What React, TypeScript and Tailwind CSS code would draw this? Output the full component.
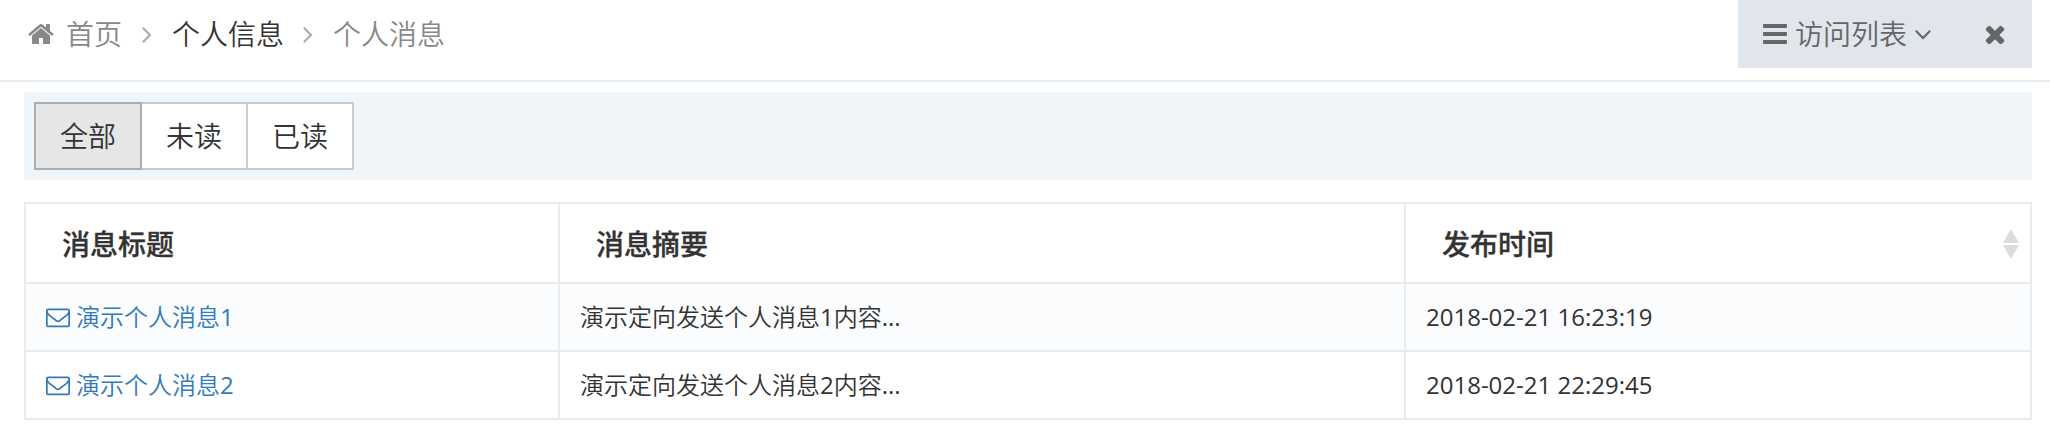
import type { ReactNode } from "react";

type IconProps = { path: string; className?: string };

function Icon({ path, className = "" }: IconProps) {
  return (
    <svg viewBox="0 0 1792 1792" fill="currentColor" className={`shrink-0 ${className}`} aria-hidden="true">
      <path d={path} />
    </svg>
  );
}

const HOME =
  "M1472 992v480q0 26-19 45t-45 19h-384v-384h-256v384h-384q-26 0-45-19t-19-45v-480q0-1 .5-3t.5-3l575-474 575 474q1 2 1 6zm223-69l-62 74q-8 9-21 11h-3q-13 0-21-7l-692-577-692 577q-12 8-24 7-13-2-21-11l-62-74q-8-10-7-23.5t11-21.5l719-599q32-26 76-26t76 26l244 204v-195q0-14 9-23t23-9h192q14 0 23 9t9 23v408l219 182q10 8 11 21.5t-7 23.5z";
const BARS =
  "M1664 1344v128q0 26-19 45t-45 19h-1408q-26 0-45-19t-19-45v-128q0-26 19-45t45-19h1408q26 0 45 19t19 45zm0-512v128q0 26-19 45t-45 19h-1408q-26 0-45-19t-19-45v-128q0-26 19-45t45-19h1408q26 0 45 19t19 45zm0-512v128q0 26-19 45t-45 19h-1408q-26 0-45-19t-19-45v-128q0-26 19-45t45-19h1408q26 0 45 19t19 45z";
const TIMES =
  "M1490 1322q0 40-28 68l-136 136q-28 28-68 28t-68-28l-294-294-294 294q-28 28-68 28t-68-28l-136-136q-28-28-28-68t28-68l294-294-294-294q-28-28-28-68t28-68l136-136q28-28 68-28t68 28l294 294 294-294q28-28 68-28t68 28l136 136q28 28 28 68t-28 68l-294 294 294 294q28 28 28 68z";
const ANGLE_RIGHT =
  "M1171 960q0 13-10 23l-466 466q-10 10-23 10t-23-10l-50-50q-10-10-10-23t10-23l393-393-393-393q-10-10-10-23t10-23l50-50q10-10 23-10t23 10l466 466q10 10 10 23z";
const ANGLE_DOWN =
  "M1395 736q0 13-10 23l-466 466q-10 10-23 10t-23-10l-466-466q-10-10-10-23t10-23l50-50q10-10 23-10t23 10l393 393 393-393q10-10 23-10t23 10l50 50q10 10 10 23z";
const ENVELOPE =
  "M1664 1504v-768q-32 36-69 66-268 206-426 338-51 43-83 67t-86.5 48.5-102.5 24.5h-2q-48 0-102.5-24.5t-86.5-48.5-83-67q-158-132-426-338-37-30-69-66v768q0 13 9.5 22.5t22.5 9.5h1472q13 0 22.5-9.5t9.5-22.5zm0-1051v-24.5l-.5-13-3-12.5-5.5-9-9-7.5-14-2.5h-1472q-13 0-22.5 9.5t-9.5 22.5q0 168 147 284 193 152 401 317 6 5 35 29.5t46 37.5 44.5 31.5 50.5 27.5 43 9h2q20 0 43-9t50.5-27.5 44.5-31.5 46-37.5 35-29.5q208-165 401-317 54-43 100.5-115.5t46.5-131.5zm128-37v1088q0 66-47 113t-113 47h-1472q-66 0-113-47t-47-113v-1088q0-66 47-113t113-47h1472q66 0 113 47t47 113z";

const messages = [
  { title: "演示个人消息1", summary: "演示定向发送个人消息1内容...", time: "2018-02-21 16:23:19" },
  { title: "演示个人消息2", summary: "演示定向发送个人消息2内容...", time: "2018-02-21 22:29:45" },
];

/** Sets Chinese runs in the demi-light weight and keeps Latin runs regular. */
function MixedText({ text }: { text: string }) {
  return (
    <span>
      {text.split(/([\u4e00-\u9fff]+)/).filter(Boolean).map((run, i) => (
        <span key={i} className={/[\u4e00-\u9fff]/.test(run) ? "font-[350]" : "font-normal"}>
          {run}
        </span>
      ))}
    </span>
  );
}

function HeadCell({ children }: { children: ReactNode }) {
  return (
    <th className="border-r-2 border-b-2 border-[#e7ecf1] p-0 text-left text-[28px] leading-10 font-medium [-webkit-text-stroke:0.3px_#333]">
      <div className="flex h-[78px] items-center justify-between pt-px pr-[11px] pl-9">{children}</div>
    </th>
  );
}

export default function App() {
  return (
    <div className="h-[440px] w-[2050px] overflow-hidden bg-white font-['Open_Sans','Noto_Sans_CJK_SC',sans-serif] text-[28px] leading-10 text-[#333]">
      <header className="flex h-[82px] items-start justify-between border-b-2 border-[#e7ecf1] pr-[18px] pl-[27px]">
        <nav className="flex h-[68px] items-center font-[350]">
          <Icon path={HOME} className="size-7 text-[#888]" />
          <a className="ml-[11px] text-[#888]">首页</a>
          <Icon path={ANGLE_RIGHT} className="ml-[11px] size-7 text-[#aaa]" />
          <a className="ml-[11px] text-[#333]">个人信息</a>
          <Icon path={ANGLE_RIGHT} className="ml-[10px] size-7 text-[#aaa]" />
          <span className="ml-[11px] text-[#888]">个人消息</span>
        </nav>
        <div className="flex h-[68px] items-center bg-[#e1e5ec] font-[350] text-[#666]">
          <button className="flex h-full items-center pl-[23px]">
            <Icon path={BARS} className="size-7" />
            <span className="ml-[6px]">访问列表</span>
            <Icon path={ANGLE_DOWN} className="ml-[2px] size-7" />
          </button>
          <button className="ml-[44px] mr-[23px]">
            <Icon path={TIMES} className="size-7" />
          </button>
        </div>
      </header>

      <main className="pt-[10px] pr-[18px] pl-6">
        <div className="flex h-[88px] items-center bg-[#f0f5fa] px-[10px] font-[350]">
          <button className="h-[68px] w-[108px] border-2 border-[#adadad] bg-[#e6e6e6]">全部</button>
          <button className="h-[68px] w-[106px] border-2 border-l-0 border-[#ccc] bg-white">未读</button>
          <button className="h-[68px] w-[106px] border-2 border-l-0 border-[#ccc] bg-white">已读</button>
        </div>

        <table className="mt-[22px] w-[2008px] table-fixed border-separate border-spacing-0 border-t-2 border-l-2 border-[#e7ecf1]">
          <colgroup>
            <col className="w-[534px]" />
            <col className="w-[846px]" />
            <col />
          </colgroup>
          <thead>
            <tr>
              <HeadCell>消息标题</HeadCell>
              <HeadCell>消息摘要</HeadCell>
              <HeadCell>
                发布时间
                <svg viewBox="0 0 16 30" className="h-[30px] w-4 text-[#dcdcdc]" fill="currentColor" aria-hidden="true">
                  <path d="M8 0l8 14H0zM8 30l8-14H0z" />
                </svg>
              </HeadCell>
            </tr>
          </thead>
          <tbody className="text-[24px]">
            {messages.map((m) => (
              <tr key={m.title} className="odd:bg-[#fbfcfd]">
                <td className="border-r-2 border-b-2 border-[#e7ecf1] p-0">
                  <a className="flex h-[66px] items-center pl-5 text-[#337ab7]">
                    <Icon path={ENVELOPE} className="size-6" />
                    <span className="ml-[6px]">
                      <MixedText text={m.title} />
                    </span>
                  </a>
                </td>
                <td className="border-r-2 border-b-2 border-[#e7ecf1] p-0 pl-5">
                  <MixedText text={m.summary} />
                </td>
                <td className="border-r-2 border-b-2 border-[#e7ecf1] p-0 pl-5">{m.time}</td>
              </tr>
            ))}
          </tbody>
        </table>
      </main>
    </div>
  );
}
